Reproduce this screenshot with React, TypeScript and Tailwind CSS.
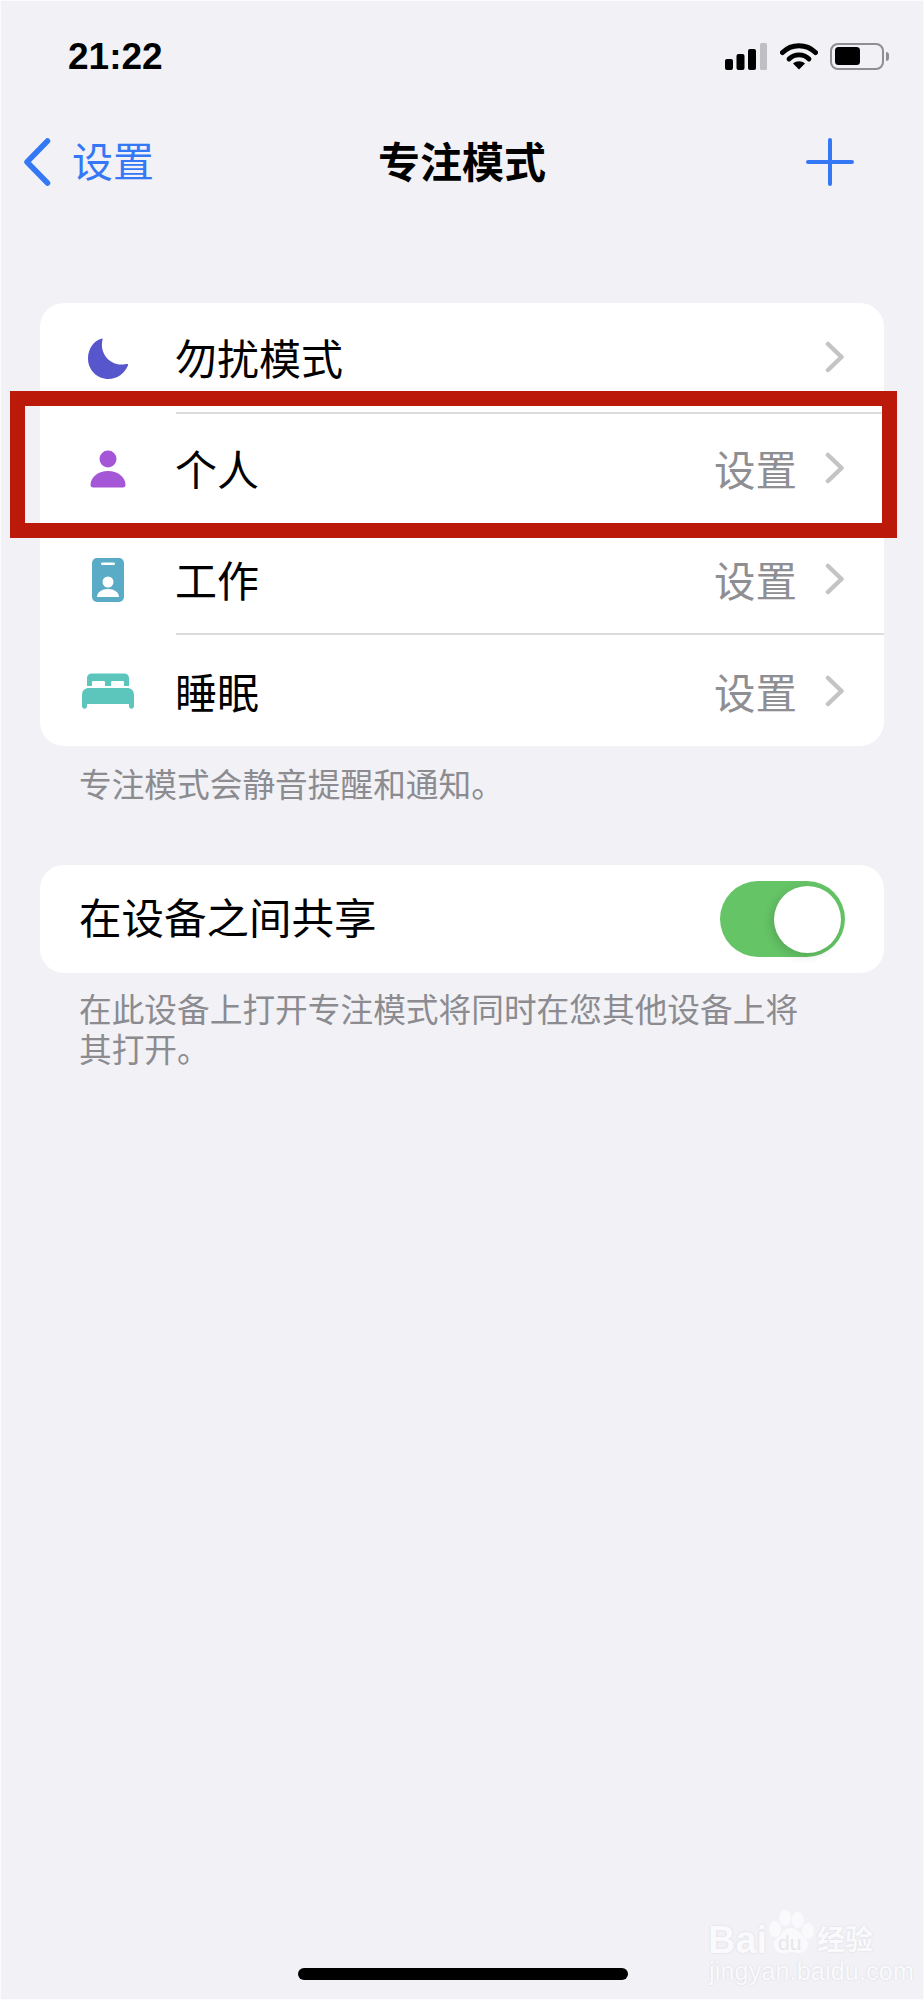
const cjk = 'font-["Liberation_Sans","Noto_Sans_CJK_SC",sans-serif]';

function Chevron() {
  return (
    <svg width="20" height="32" viewBox="0 0 20 32" fill="none" className="shrink-0">
      <path d="M3 3 L16.5 16 L3 29" stroke="#c4c4c7" strokeWidth="4.5" strokeLinecap="round" strokeLinejoin="round" />
    </svg>
  );
}

function MoonIcon() {
  return (
    <svg width="41" height="41" viewBox="0 0 41 41">
      <path d="M14 .5C6 2.500 0 10.500 0 20.500 0 32 9 41 20.500 41 29 41 36 36 40 27.500 40.500 26 39 25.700 37 26.200 24 29 11 17 14.500 1.800 14.800.5 14.600.3 14 .5Z" fill="#5856cd" />
    </svg>
  );
}

function PersonIcon() {
  return (
    <svg width="36" height="38" viewBox="0 0 36 38">
      <circle cx="18" cy="9" r="8.5" fill="#a556d6" />
      <path d="M.5 35C.5 27 8.500 21 18 21S35.500 27 35.500 35C35.500 36.500 34.500 37.500 33 37.500H3C1.500 37.500.5 36.500.5 35Z" fill="#a556d6" />
    </svg>
  );
}

function BadgeIcon() {
  return (
    <svg width="32" height="44" viewBox="0 0 32 44">
      <rect width="32" height="44" rx="5" fill="#5aacc6" />
      <rect x="9" y="4.500" width="14" height="2.500" rx="1.200" fill="#fff" />
      <circle cx="16" cy="24" r="5.500" fill="#fff" />
      <path d="M5 39C5 34 10 31 16 31S27 34 27 39Z" fill="#fff" />
    </svg>
  );
}

function BedIcon() {
  return (
    <svg width="52" height="36" viewBox="0 0 52 36">
      <path d="M5 13V5C5 2.500 7 .5 9.500.5H42.500C45 .5 47 2.500 47 5V13H42V9.500C42 8.500 41.500 8 40.500 8H30.500C29.500 8 29 8.500 29 9.500V13H23V9.500C23 8.500 22.500 8 21.500 8H11.500C10.500 8 10 8.500 10 9.500V13Z" fill="#5cc6bd" />
      <path d="M0 22C0 17.500 3 15 7 15H45C49 15 52 17.500 52 22V33C52 34.800 51 35.800 49.500 35.800S47 34.800 47 33V31H5V33C5 34.800 4 35.800 2.500 35.800S0 34.800 0 33Z" fill="#5cc6bd" />
    </svg>
  );
}

function StatusIcons() {
  return (
    <div className="flex items-center">
      <svg width="42" height="27" viewBox="0 0 42 27">
        <rect x="0" y="16" width="8" height="11" rx="2" fill="#000" />
        <rect x="11.500" y="11" width="8" height="16" rx="2" fill="#000" />
        <rect x="23" y="6" width="8" height="21" rx="2" fill="#000" />
        <rect x="35" y="0" width="7" height="27" rx="1.500" fill="#c0c0c4" />
      </svg>
      <svg width="38" height="28" viewBox="0 0 38 28" className="ml-[13px]">
        <path d="M2.500 10.500C11.500 1.500 26.500 1.500 35.500 10.500" stroke="#000" strokeWidth="5" strokeLinecap="round" fill="none" />
        <path d="M9 17C14.500 11.500 23.500 11.500 29 17" stroke="#000" strokeWidth="4.800" strokeLinecap="round" fill="none" />
        <path d="M13 21.500C16.500 18.500 21.500 18.500 25 21.500L19 27.500Z" fill="#000" />
      </svg>
      <div className="ml-[12px] flex items-center">
        <div className="flex h-[27px] w-[54px] items-center rounded-[8px] border-[2px] border-[#8f8f92] px-[3px]">
          <div className="h-[18px] w-[25px] rounded-[3.500px] bg-black" />
        </div>
        <div className="ml-[2px] h-[9px] w-[3px] rounded-r-full bg-[#8f8f92]" />
      </div>
    </div>
  );
}

function Row({ icon, label, value, divider }: { icon: React.ReactNode; label: string; value?: string; divider?: boolean }) {
  return (
    <div className="flex h-[110.750px]">
      <div className="flex w-[136px] shrink-0 items-center justify-center">{icon}</div>
      <div className={`flex flex-1 items-center pr-[39px] ${divider ? 'border-b-2 border-[#dcdcde]' : ''}`}>
        <span className="-ml-[1px] flex-1 pt-[8px] text-[42px] leading-none text-black">{label}</span>
        {value && <span className="mr-[28px] pt-[8px] text-[41.500px] leading-none text-[#8e8e93]">{value}</span>}
        <Chevron />
      </div>
    </div>
  );
}

function Watermark() {
  return (
    <div className="absolute left-[700px] top-[1900px] h-[84px] w-[190px] text-[#fafafc] [text-shadow:0_0_2px_#d4d4d9]">
      <span className='absolute left-[7px] top-[17px] font-["Liberation_Sans",sans-serif] text-[38px] font-bold leading-[44px]'>Bai</span>
      <svg width="52" height="46" viewBox="0 0 52 46" className="absolute left-[65px] top-[7px]">
        <ellipse cx="19" cy="10" rx="6" ry="8" fill="#fafafc" />
        <ellipse cx="32" cy="12" rx="6" ry="8" fill="#fafafc" />
        <ellipse cx="9" cy="21" rx="6" ry="8" fill="#fafafc" />
        <ellipse cx="42" cy="23" rx="6" ry="8" fill="#fafafc" />
        <path d="M25 20C32 20 34 26 39 30 45 35 42 45 33 45 29 45 28 44 25 44S21 45 17 45C8 45 5 35 11 30 16 26 18 20 25 20Z" fill="#fafafc" />
      </svg>
      <span className='absolute left-[77px] top-[30px] font-["Liberation_Sans",sans-serif] text-[21px] leading-[24px] text-[#e6e6ea] [text-shadow:none]'>du</span>
      <span className={`absolute left-[116px] top-[25px] text-[28px] font-bold leading-[30px] ${cjk}`}>经验</span>
      <span className='absolute left-[8px] top-[56px] font-["Liberation_Sans",sans-serif] text-[25px] leading-[28px] tracking-[.2px]'>jingyan.baidu.com</span>
    </div>
  );
}

export default function App() {
  return (
    <div className={`relative h-[2000px] w-[924px] overflow-hidden border border-[#fbfbfc] bg-[#f1f1f6] ${cjk}`}>
      <div className="flex h-[114px] items-start justify-between pl-[67px] pr-[34px] pt-[41px]">
        <span className="text-[37px] font-bold leading-[30px] text-black">21:22</span>
        <StatusIcons />
      </div>

      <div className="grid h-[94px] grid-cols-3 items-center px-[22px]">
        <div className="flex items-center text-[#3478f6]">
          <svg width="28" height="48" viewBox="0 0 28 48" fill="none">
            <path d="M24.500 3 L4 24 L24.500 45" stroke="#3478f6" strokeWidth="5.500" strokeLinecap="round" strokeLinejoin="round" />
          </svg>
          <span className="ml-[21px] pt-[3px] text-[41px] leading-none">设置</span>
        </div>
        <span className="pt-[3px] text-center text-[42px] font-bold leading-none text-black">专注模式</span>
        <div className="flex justify-end pr-[47px]">
          <svg width="48" height="48" viewBox="0 0 48 48" fill="none">
            <path d="M24 2V46M2 24H46" stroke="#3478f6" strokeWidth="4" strokeLinecap="round" />
          </svg>
        </div>
      </div>

      <div className="px-[39px] pt-[94px]">
        <div className="overflow-hidden rounded-[24px] bg-white">
          <Row icon={<MoonIcon />} label="勿扰模式" divider />
          <Row icon={<PersonIcon />} label="个人" value="设置" divider />
          <Row icon={<BadgeIcon />} label="工作" value="设置" divider />
          <Row icon={<BedIcon />} label="睡眠" value="设置" />
        </div>
        <p className="pl-[39px] pt-[20px] text-[32.700px] leading-[40px] text-[#8b8b90]">专注模式会静音提醒和通知。</p>

        <div className="mt-[59px] flex h-[108px] items-center justify-between rounded-[24px] bg-white pl-[39px] pr-[39px]">
          <span className="pt-[3px] text-[42.500px] leading-none text-black">在设备之间共享</span>
          <div className="flex h-[76px] w-[125px] items-center justify-end rounded-full bg-[#65c466] pr-[4px]">
            <div className="h-[67px] w-[67px] rounded-full bg-white shadow-[-3px_3px_10px_rgba(0,0,0,0.14)]" />
          </div>
        </div>
        <p className="pl-[39px] pr-[70px] pt-[18px] text-[32.700px] leading-[40px] text-[#8b8b90]">在此设备上打开专注模式将同时在您其他设备上将其打开。</p>
      </div>

      <div className="absolute left-[9px] top-[390px] h-[147px] w-[887px] border-[15px] border-[#bb1a0b]" />
      <div className="absolute left-[297px] top-[1967px] h-[12px] w-[330px] rounded-full bg-black" />
      <Watermark />
    </div>
  );
}
